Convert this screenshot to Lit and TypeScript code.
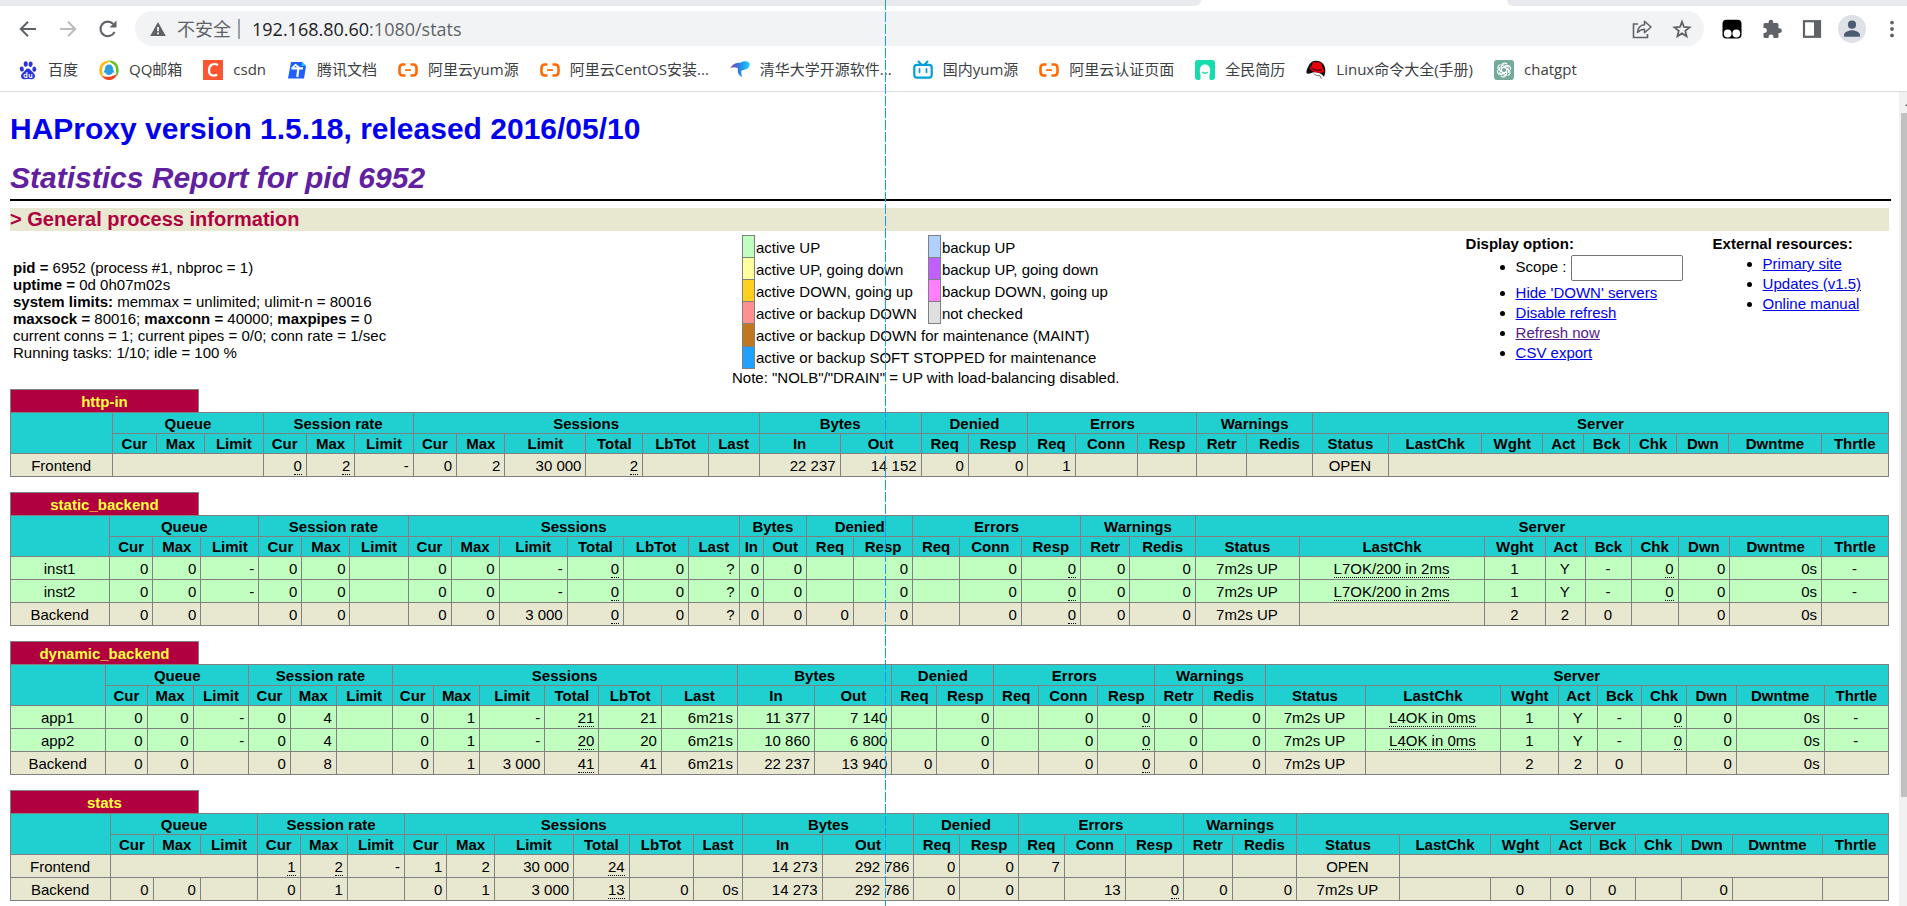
import { LitElement, html, css, svg, nothing } from "lit";
import { customElement, property } from "lit/decorators.js";
import { classMap } from "lit/directives/class-map.js";

const ali = svg`<path d="M7.500 4.500H4.800Q1.500 4.500 1.500 8v4q0 3.500 3.300 3.500h2.700M12.500 4.500h2.700Q18.500 4.500 18.500 8v4q0 3.500-3.300 3.500h-2.700" fill="none" stroke="#ff6a00" stroke-width="2.600"/><path d="M7 9.200h6v1.700H7z" fill="#ff6a00"/>`;

const ICONS: Record<string, unknown> = {
  baidu: svg`<g fill="#2932e1"><ellipse cx="3.800" cy="9" rx="2" ry="2.600" transform="rotate(-12 3.800 9)"/><ellipse cx="7.700" cy="4" rx="2" ry="2.800"/><ellipse cx="12.600" cy="4.200" rx="2" ry="2.800" transform="rotate(10 12.600 4.200)"/><ellipse cx="16.300" cy="9.200" rx="1.900" ry="2.600"/><path d="M10 8.500c2 0 2.600 1.600 4 3 1.500 1.500 3.200 2.600 3 4.800-.2 2.400-2.300 3.300-4.400 2.900-1.800-.4-3.500-.4-5.200 0C5.200 19.700 3.200 18.700 3 16.300c-.1-2 1.700-3.300 3.200-4.800 1.300-1.400 1.900-3 3.800-3z"/></g><g fill="none" stroke="#fff" stroke-width="1.100"><path d="M8.900 12v5.400H7.500a1.500 1.500 0 0 1 0-3.100h1.400M11.200 14v2.300q0 1.100 1.100 1.100h1.500V14"/></g>`,
  qq: svg`<path d="M11 1C5 0 .3 4.500.3 10.200c0 3 1.300 5.500 3.200 7.300C3.500 12 3.500 5 11 1z" fill="#fcb80b"/><path d="M9 .6C15.500-.2 20 4.500 19.700 10.500c-.1 2.600-.9 4.500-2.200 6C17.500 11 15.500 4 9 .6z" fill="#6abf2a"/><path d="M2.800 15.500c4 1.800 9.200 1.800 15.200-1.500-1.300 4-4.500 6-8 6-3.300 0-6-1.800-7.200-4.500z" fill="#f0421f"/><circle cx="10" cy="9.800" r="7" fill="#fff"/><path d="M10 4.500c2.600 0 4 1.900 4 4.200 0 1.400 1.300 2.500 1.300 4.200-.8.200-1-.3-1.500-.8 0 1.600-1.800 2.900-3.800 2.900s-3.800-1.300-3.800-2.900c-.5.500-.9 1-1.500.8 0-1.700 1.300-2.800 1.300-4.200 0-2.300 1.400-4.200 4-4.200z" fill="#2b9ee0"/>`,
  csdn: svg`<rect width="20" height="20" fill="#fc5531"/><path d="M15 5C10 2.500 6.200 5 6 10c-.2 5 3.200 6.800 8.200 4.800" fill="none" stroke="#fff" stroke-width="2.200"/>`,
  tencent: svg`<path d="M4 2h11l4 4-2 12.500H1z" fill="#1e5fff"/><path d="M15 2l4 4h-4.500z" fill="#0fd0ff"/><path d="M4.500 8.300h11.500M11.500 7l-1.200 10" fill="none" stroke="#fff" stroke-width="2.200"/><path d="M5 8 8.500 4.800 12 7.500" fill="none" stroke="#fff" stroke-width="1.600"/>`,
  ali,
  bird: svg`<defs><linearGradient id="bird" x1="0" y1="0" x2="1" y2="0"><stop offset="0" stop-color="#8a3fa8"/><stop offset=".45" stop-color="#2d7de8"/><stop offset="1" stop-color="#18d4f5"/></linearGradient></defs><path d="M.5 8C3 3.500 7 2.600 10.500 2.800 13 .6 17 .8 19.500 3c.6 2.800-.6 5.600-4.300 6.600l-3.700 1c-.6 2.400-.2 4.200.8 6.400C8.500 15.500 7 12 8 8.200 5.500 7 3 7 .5 8z" fill="url(#bird)"/>`,
  bili: svg`<path d="m5.500 1.500 2.700 3M14.500 1.500l-2.700 3" stroke="#00a1d6" stroke-width="2" stroke-linecap="round"/><rect x="1.300" y="4.800" width="17.400" height="12.900" rx="2.600" fill="#fff" stroke="#00a1d6" stroke-width="2.200"/><path d="M6.500 9v3.300M13.500 9v3.300" stroke="#00a1d6" stroke-width="1.800" stroke-linecap="round"/>`,
  resume: svg`<path d="M3 0h14q3 0 3 3v14q0 3-3 3t-2.500-2V15h-9v3q.5 2-2.500 2t-3-3V3q0-3 3-3z" fill="#14dcae"/><path d="M10 4.500c3.400 0 5.200 2.600 5.200 6.500 0 4-1.800 6-5.200 6s-5.200-2-5.200-6c0-3.900 1.800-6.500 5.200-6.500z" fill="#fff"/><path d="M7.300 12q2.700 2.500 5.400 0" fill="none" stroke="#14dcae" stroke-width="1.400"/>`,
  redhat: svg`<path d="M10 .8c5 0 8.600 3 9.200 8.200.3 3-.1 5.500-1.200 7.800-2.400-3.300-5.500-4.800-9.500-4.600C5 12.500 3 14.500 1.200 13.500-.5 12.500.8 9.500 2.500 6 4 2.700 6.500.8 10 .8z" fill="#111"/><path d="M5.300 6.500 7 2.500c1.200-1 2.500.2 4 0s3.200-.4 4.200.8l1.600 5c2.200 1.600 1.700 4-1.500 4.500-4 .5-8-.6-11-3.200-1.200-1.200-.5-2.500 1-3.100z" fill="#e8000e"/><path d="M5 7.500c2 2.200 6.500 3.500 11 2" stroke="#111" fill="none"/><path d="M7.500 13.500c2 2 4 2.300 6.500 2.200l1.500 3.300" stroke="#555" stroke-width=".8" fill="none"/>`,
  gpt: svg`<rect width="20" height="20" rx="3" fill="#74aa9c"/><g fill="none" stroke="#fff" stroke-width="1.100">${[0, 60, 120, 180, 240, 300].map((a) => svg`<path transform="rotate(${a} 10 10)" d="M7.400 11.500V6.200a3.200 3.200 0 0 1 5.600-2M7.400 8.500l4.600-2.700 3 1.700"/>`)}</g>`,
  back: svg`<path d="M18 10H3M10 2.800 2.800 10l7.200 7.200" fill="none" stroke="#5f6368" stroke-width="2"/>`,
  forward: svg`<path d="M2 10h15M10 2.800l7.200 7.200-7.200 7.200" fill="none" stroke="#babcbe" stroke-width="2"/>`,
  reload: svg`<path d="M16.500 12.800A7.300 7.300 0 1 1 15.200 5" fill="none" stroke="#5f6368" stroke-width="2.100"/><path d="M18.500 1.500v7h-7z" fill="#5f6368"/>`,
  warn: svg`<path d="M10 3 17.800 17H2.200z" fill="#5f6368"/><path d="M9.200 8h1.700v4.300H9.200zM9.200 13.600h1.700v1.700H9.200z" fill="#fff"/>`,
  share: svg`<path d="M6 5H1.500v13.500h14V15" fill="none" stroke="#5f6368" stroke-width="1.600"/><path d="M5.500 13.500c.4-5 3-7.500 7-7.800V2.200L19 8l-6.500 5.700v-3.500c-3 0-5 1-7 3.300z" fill="none" stroke="#5f6368" stroke-width="1.500" stroke-linejoin="round"/>`,
  star: svg`<path d="m10 2.800 2 5.200 5.500.4-4.200 3.500 1.300 5.400L10 14.400l-4.600 2.900 1.300-5.400-4.200-3.500L8 8z" fill="none" stroke="#5f6368" stroke-width="1.800"/>`,
  monkey: svg`<rect x=".5" y=".8" width="19" height="18.700" rx="4" fill="#000"/><circle cx="5.700" cy="14.500" r="3.900" fill="#fff"/><circle cx="14.300" cy="14.500" r="3.900" fill="#fff"/>`,
  puzzle: svg`<path d="M17.500 9.300h-1V5.500q0-1.500-1.500-1.500h-3.800V3a2.300 2.300 0 0 0-4.600 0v1H3Q1.500 4 1.500 5.500v3.600h1a2.400 2.400 0 0 1 0 4.900h-1v3.500Q1.500 19 3 19h3.600v-1a2.400 2.400 0 0 1 4.900 0v1H15q1.500 0 1.500-1.500V14h1a2.300 2.300 0 0 0 0-4.700z" fill="#5f6368"/>`,
  panel: svg`<rect x="2" y="2.200" width="16" height="15.600" fill="none" stroke="#5f6368" stroke-width="2.200"/><path d="M12 2h6v16h-6z" fill="#5f6368"/>`,
  avatar: svg`<circle cx="10" cy="10" r="10" fill="#dee1e6"/><circle cx="10" cy="6.900" r="2.900" fill="#4b5b73"/><path d="M4.300 15.500v-1.200c0-2.300 3.800-3.400 5.700-3.400s5.700 1.100 5.700 3.400v1.200z" fill="#4b5b73"/>`,
  more: svg`<g fill="#5f6368"><circle cx="10" cy="3.600" r="1.900"/><circle cx="10" cy="10" r="1.900"/><circle cx="10" cy="16.400" r="1.900"/></g>`,
};

const icon = (name: string, size = 20) =>
  html`<svg width=${size} height=${size} viewBox="0 0 20 20" aria-hidden="true">${ICONS[name]}</svg>`;

const BOOKMARKS: [string, string][] = [
  ["baidu", "百度"],
  ["qq", "QQ邮箱"],
  ["csdn", "csdn"],
  ["tencent", "腾讯文档"],
  ["ali", "阿里云yum源"],
  ["ali", "阿里云CentOS安装..."],
  ["bird", "清华大学开源软件..."],
  ["bili", "国内yum源"],
  ["ali", "阿里云认证页面"],
  ["resume", "全民简历"],
  ["redhat", "Linux命令大全(手册)"],
  ["gpt", "chatgpt"],
];

@customElement("browser-bar")
class BrowserBar extends LitElement {
  static styles = css`
    :host {
      display: block;
      font-family: "Open Sans", "Noto Sans CJK SC", sans-serif;
      border-bottom: 1px solid #dadce0;
      background: #fff;
    }
    .tabs {
      display: flex;
      height: 6px;
    }
    .strip {
      background: #e8eaed;
    }
    .strip.left {
      width: 63%;
      border-bottom-right-radius: 8px;
    }
    .current {
      width: 16%;
    }
    .strip.right {
      flex: 1;
      border-bottom-left-radius: 8px;
    }
    .toolbar {
      display: flex;
      align-items: center;
      padding: 5px 5px 0 18px;
    }
    button {
      display: flex;
      padding: 0;
      border: 0;
      background: none;
    }
    .nav {
      display: flex;
      gap: 20px;
      margin-right: 17px;
    }
    .address {
      flex: 1;
      display: flex;
      align-items: center;
      height: 35px;
      padding: 0 12px 0 13px;
      border-radius: 18px;
      background: #f1f3f4;
      color: #5f6368;
      font-size: 18px;
      line-height: 24px;
    }
    .insecure {
      margin-left: 9px;
      padding-right: 7px;
      border-right: 2px solid #9aa0a6;
      line-height: 20px;
    }
    .url {
      flex: 1;
      margin-left: 12px;
    }
    .host {
      color: #202124;
    }
    .actions {
      display: flex;
      gap: 20px;
    }
    .tools {
      display: flex;
      align-items: center;
      gap: 20px;
      margin-left: 18px;
    }
    .tools .profile {
      margin: 0 -4px;
    }
    .bookmarks {
      display: flex;
      gap: 21px;
      padding: 12px 18px 10px;
    }
    .bookmarks a {
      display: flex;
      align-items: center;
      gap: 10px;
      height: 23px;
      color: #3c4043;
      font-size: 15px;
      line-height: 23px;
      text-decoration: none;
      white-space: nowrap;
    }
  `;

  render() {
    return html`
      <div class="tabs">
        <div class="strip left"></div>
        <div class="current"></div>
        <div class="strip right"></div>
      </div>
      <div class="toolbar">
        <div class="nav">
          <button aria-label="Back">${icon("back")}</button>
          <button aria-label="Forward">${icon("forward")}</button>
          <button aria-label="Reload">${icon("reload")}</button>
        </div>
        <div class="address">
          ${icon("warn")}
          <span class="insecure">不安全</span>
          <span class="url"><span class="host">192.168.80.60</span>:1080/stats</span>
          <div class="actions">
            <button aria-label="Share">${icon("share")}</button>
            <button aria-label="Bookmark">${icon("star")}</button>
          </div>
        </div>
        <div class="tools">
          <button aria-label="Tampermonkey">${icon("monkey")}</button>
          <button aria-label="Extensions">${icon("puzzle")}</button>
          <button aria-label="Side panel">${icon("panel")}</button>
          <button class="profile" aria-label="Profile">${icon("avatar", 28)}</button>
          <button aria-label="Menu">${icon("more")}</button>
        </div>
      </div>
      <nav class="bookmarks">
        ${BOOKMARKS.map(([i, t]) => html`<a href="#">${icon(i)}<span>${t}</span></a>`)}
      </nav>
    `;
  }
}

const GROUPS: [string, string[]][] = [
  ["Queue", ["Cur", "Max", "Limit"]],
  ["Session rate", ["Cur", "Max", "Limit"]],
  ["Sessions", ["Cur", "Max", "Limit", "Total", "LbTot", "Last"]],
  ["Bytes", ["In", "Out"]],
  ["Denied", ["Req", "Resp"]],
  ["Errors", ["Req", "Conn", "Resp"]],
  ["Warnings", ["Retr", "Redis"]],
  ["Server", ["Status", "LastChk", "Wght", "Act", "Bck", "Chk", "Dwn", "Dwntme", "Thrtle"]],
];

// Zero-based column indexes whose values are centred.
const CENTERED = new Set([0, 22, 23, 24, 25, 26, 30]);

interface Row {
  up?: boolean;
  cells: string;
}
interface Proxy {
  name: string;
  rows: Row[];
}

const PROXIES: Proxy[] = [
  {
    name: "http-in",
    rows: [{ cells: "Frontend|3*|_0|_2|-|0|2|30 000|_2|||22 237|14 152|0|0|1|||||OPEN|8*" }],
  },
  {
    name: "static_backend",
    rows: [
      { up: true, cells: "inst1|0|0|-|0|0||0|0|-|_0|0|?|0|0||0||0|_0|0|0|7m2s UP|_L7OK/200 in 2ms|1|Y|-|_0|0|0s|-" },
      { up: true, cells: "inst2|0|0|-|0|0||0|0|-|_0|0|?|0|0||0||0|_0|0|0|7m2s UP|_L7OK/200 in 2ms|1|Y|-|_0|0|0s|-" },
      { cells: "Backend|0|0||0|0||0|0|3 000|_0|0|?|0|0|0|0||0|_0|0|0|7m2s UP||2|2|0||0|0s|" },
    ],
  },
  {
    name: "dynamic_backend",
    rows: [
      { up: true, cells: "app1|0|0|-|0|4||0|1|-|_21|21|6m21s|11 377|7 140||0||0|_0|0|0|7m2s UP|_L4OK in 0ms|1|Y|-|_0|0|0s|-" },
      { up: true, cells: "app2|0|0|-|0|4||0|1|-|_20|20|6m21s|10 860|6 800||0||0|_0|0|0|7m2s UP|_L4OK in 0ms|1|Y|-|_0|0|0s|-" },
      { cells: "Backend|0|0||0|8||0|1|3 000|_41|41|6m21s|22 237|13 940|0|0||0|_0|0|0|7m2s UP||2|2|0||0|0s|" },
    ],
  },
  {
    name: "stats",
    rows: [
      { cells: "Frontend|3*|_1|_2|-|1|2|30 000|_24|||14 273|292 786|0|0|7|||||OPEN|8*" },
      { cells: "Backend|0|0||0|1||0|1|3 000|_13|0|0s|14 273|292 786|0|0||13|_0|0|0|7m2s UP||0|0|0||0||" },
    ],
  },
];

@customElement("proxy-table")
class ProxyTable extends LitElement {
  @property({ attribute: false }) proxy!: Proxy;

  static styles = css`
    :host {
      display: block;
      margin-bottom: 15px;
    }
    :host(:last-of-type) {
      margin-bottom: 0;
    }
    .name {
      box-sizing: border-box;
      width: calc(10% + 1px);
      border: 1px solid gray;
      border-bottom: 0;
      padding: 3px 4px 2px;
      background: #b00040;
      color: #ffff40;
      font-size: 15px;
      line-height: 17px;
      font-weight: bold;
      text-align: center;
    }
    .name a {
      color: inherit;
      text-decoration: none;
    }
    table {
      width: 100%;
      border-collapse: collapse;
      font-size: 15px;
      line-height: 17px;
    }
    th,
    td {
      border: 1px solid gray;
      white-space: nowrap;
    }
    th {
      padding: 1px;
      background: #20d0d0;
    }
    .group th {
      padding-top: 2px;
    }
    td {
      padding: 3px 4px 2px 3px;
      background: #e8e8d0;
      text-align: right;
    }
    .up td {
      background: #c0ffc0;
    }
    td.center {
      text-align: center;
    }
    .tip {
      border-bottom: 1px dotted #000;
    }
  `;

  private row(r: Row) {
    let col = 0;
    const cells = r.cells.split("|").map((raw) => {
      const span = raw.endsWith("*") ? parseInt(raw, 10) : 1;
      const center = CENTERED.has(col);
      col += span;
      const text = span > 1 ? "" : raw.replace("_", "");
      return html`<td class=${classMap({ center })} colspan=${span}>${raw.startsWith("_") ? html`<span class="tip">${text}</span>` : text}</td>`;
    });
    return html`<tr class=${r.up ? "up" : ""}>${cells}</tr>`;
  }

  render() {
    return html`
      <div class="name"><a href="#">${this.proxy.name}</a></div>
      <table>
        <thead>
          <tr class="group">
            <th rowspan="2"></th>
            ${GROUPS.map(([t, cols]) => html`<th colspan=${cols.length}>${t}</th>`)}
          </tr>
          <tr>${GROUPS.map(([, cols]) => cols.map((c) => html`<th>${c}</th>`))}</tr>
        </thead>
        <tbody>${this.proxy.rows.map((r) => this.row(r))}</tbody>
      </table>
    `;
  }
}

const LEGEND: [string, string, string?, string?][] = [
  ["#c0ffc0", "active UP", "#b0d0ff", "backup UP"],
  ["#ffffa0", "active UP, going down", "#c060ff", "backup UP, going down"],
  ["#ffd020", "active DOWN, going up", "#ff80ff", "backup DOWN, going up"],
  ["#ff9090", "active or backup DOWN", "#e0e0e0", "not checked"],
  ["#c07820", "active or backup DOWN for maintenance (MAINT)"],
  ["#20a0ff", "active or backup SOFT STOPPED for maintenance"],
];

@customElement("app-root")
class AppRoot extends LitElement {
  static styles = css`
    :host {
      display: flex;
      flex-direction: column;
      position: relative;
      min-height: 100vh;
      background: #fff;
      color: #000;
      font-family: "Liberation Sans", Arial, sans-serif;
      font-size: 15px;
      line-height: 17px;
    }
    .guide {
      position: absolute;
      top: 0;
      bottom: 0;
      left: 885px;
      width: 1px;
      background: repeating-linear-gradient(#1a9bf0 0 10px, transparent 10px 12px);
    }
    .view {
      flex: 1;
      display: flex;
    }
    main {
      flex: 1;
      min-width: 0;
      padding: 20px 10px 0;
    }
    h1,
    h2,
    h3 {
      margin: 0;
    }
    h1,
    h2 {
      font-size: 30px;
      line-height: 34px;
    }
    h1 {
      margin-bottom: 15px;
    }
    h2 {
      font-style: italic;
      color: #6020a0;
    }
    h1 a,
    h2 a {
      text-decoration: none;
    }
    h2 a {
      color: inherit;
    }
    a {
      color: #0000ee;
    }
    a.visited {
      color: #551a8b;
    }
    hr {
      margin: 4px -2px 7px 0;
      border: 0;
      border-bottom: 2px solid #000;
    }
    h3 {
      background: #e8e8d0;
      color: #b00040;
      font-size: 20px;
      line-height: 23px;
    }
    .info {
      display: grid;
      grid-template-columns: 38% 1fr auto auto;
      align-items: start;
      min-height: 158px;
    }
    .process {
      align-self: center;
      margin: 0;
      padding: 3px;
    }
    .legend {
      padding: 4px 8px 0;
    }
    .legend table {
      margin-left: 10px;
      border-collapse: collapse;
    }
    .legend td {
      padding: 3px 2px 2px 1px;
    }
    .legend .swatch {
      width: 8px;
      border: 1px solid gray;
    }
    .legend .wide {
      padding-right: 11px;
    }
    .links {
      padding-top: 4px;
    }
    ul {
      margin: 0;
      padding-left: 50px;
    }
    li {
      margin: 3px 28px 0 0;
    }
    .display li {
      margin-right: 30px;
    }
    input {
      box-sizing: border-box;
      width: 112px;
      height: 26px;
      border: 1px solid #767676;
      border-radius: 2px;
      vertical-align: middle;
    }
    .scrollbar {
      width: 8px;
      overflow: hidden;
      background: #f1f1f1;
    }
    .arrow {
      display: block;
      margin: 0 0 0 2px;
    }
    .thumb {
      height: 84%;
      margin-left: 2px;
      background: #c1c1c1;
    }
  `;

  render() {
    return html`
      <browser-bar></browser-bar>
      <div class="view">
        <main>
          <h1><a href="#">HAProxy version 1.5.18, released 2016/05/10</a></h1>
          <h2><a href="#">Statistics Report for pid 6952</a></h2>
          <hr />
          <h3>&gt; General process information</h3>
          <section class="info">
            <p class="process">
              <b>pid = </b> 6952 (process #1, nbproc = 1)<br />
              <b>uptime = </b> 0d 0h07m02s<br />
              <b>system limits:</b> memmax = unlimited; ulimit-n = 80016<br />
              <b>maxsock = </b> 80016; <b>maxconn = </b> 40000; <b>maxpipes = </b> 0<br />
              current conns = 1; current pipes = 0/0; conn rate = 1/sec<br />
              Running tasks: 1/10; idle = 100 %
            </p>
            <div class="legend">
              <table>
                ${LEGEND.map(
                  ([c1, t1, c2, t2]) => html`<tr>
                    <td class="swatch" style="background:${c1}"></td>
                    <td class=${c2 ? "wide" : ""} colspan=${c2 ? 1 : 3}>${t1}</td>
                    ${c2 ? html`<td class="swatch" style="background:${c2}"></td><td>${t2}</td>` : nothing}
                  </tr>`
                )}
              </table>
              Note: "NOLB"/"DRAIN" = UP with load-balancing disabled.
            </div>
            <div class="links display">
              <b>Display option:</b>
              <ul>
                <li><label>Scope : <input type="text" /></label></li>
                <li><a href="#">Hide 'DOWN' servers</a></li>
                <li><a href="#">Disable refresh</a></li>
                <li><a class="visited" href="#">Refresh now</a></li>
                <li><a href="#">CSV export</a></li>
              </ul>
            </div>
            <div class="links">
              <b>External resources:</b>
              <ul>
                <li><a href="#">Primary site</a></li>
                <li><a href="#">Updates (v1.5)</a></li>
                <li><a href="#">Online manual</a></li>
              </ul>
            </div>
          </section>
          ${PROXIES.map((p) => html`<proxy-table .proxy=${p}></proxy-table>`)}
        </main>
        <div class="scrollbar">
          <svg class="arrow" width="17" height="21" viewBox="0 0 17 21" aria-hidden="true"><path d="M4 14 8 10l4 4z" fill="#505050" /></svg>
          <div class="thumb"></div>
        </div>
      </div>
      <div class="guide"></div>
    `;
  }
}
